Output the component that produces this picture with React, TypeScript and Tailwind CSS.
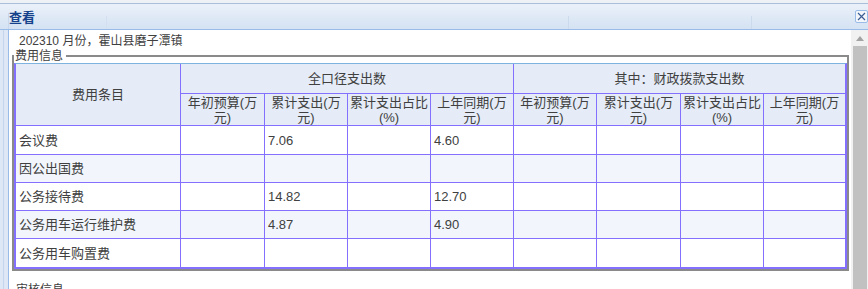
import React from "react";

const P = "border-[#8470ff]";

const subHeads: [string, string][] = [
  ["年初预算(万", "元)"],
  ["累计支出(万", "元)"],
  ["累计支出占比", "(%)"],
  ["上年同期(万", "元)"],
  ["年初预算(万", "元)"],
  ["累计支出(万", "元)"],
  ["累计支出占比", "(%)"],
  ["上年同期(万", "元)"],
];

const rows: string[][] = [
  ["会议费", "", "7.06", "", "4.60", "", "", "", ""],
  ["因公出国费", "", "", "", "", "", "", "", ""],
  ["公务接待费", "", "14.82", "", "12.70", "", "", "", ""],
  ["公务用车运行维护费", "", "4.87", "", "4.90", "", "", "", ""],
  ["公务用车购置费", "", "", "", "", "", "", "", ""],
];

export default function App() {
  return (
    <div className="relative w-[868px] h-[289px] overflow-hidden bg-white text-[#404040] font-[family-name:'Liberation_Sans','Noto_Sans_CJK_SC',sans-serif]">
      {/* top strip */}
      <div className="h-[3px] bg-[#eef2f7]" />
      {/* header */}
      <div className="relative h-[27px] border-t border-b border-t-[#a9bfd8] border-b-[#99bbe8] bg-gradient-to-b from-[#ebf1f9] to-[#d4e2f3] flex items-center pl-[9px]">
        <div className="absolute left-[8px] top-[9px] bottom-0 w-px bg-[#c9d8ec]" />
        <div className="absolute left-[106px] top-[12px] bottom-0 w-px bg-[#d3dff0]" />
        <div className="absolute left-[568px] top-[12px] bottom-0 w-px bg-[#ccdaee]" />
        <div className="absolute left-[751px] top-[12px] bottom-0 w-px bg-[#ccdaee]" />
        <span className="relative text-[13px] leading-[15px] font-bold text-[#15428b] mt-[1px]">查看</span>
        <div className="absolute left-[855px] top-[6px] w-[13px] h-[13px] rounded-[2px] border border-[#99bbe8] bg-[#f3f7fc] flex items-center justify-center">
          <svg width="9" height="9" viewBox="0 0 9 9">
            <path d="M1 1 L8 8 M8 1 L1 8" stroke="#3b5d93" strokeWidth="1.2" fill="none" />
          </svg>
        </div>
      </div>
      {/* body */}
      <div className="flex h-[259px]">
        <div className="w-[9px] bg-[#dde7f5] border-r border-[#99bbe8] flex">
          <div className="ml-[3px] w-px bg-[#c5d5eb]" />
        </div>
        <div className="w-[842px] bg-white">
          <div className="mt-[3px] pl-[10px] text-[12px] leading-[16px] h-[16px]">202310 月份，霍山县磨子潭镇</div>
          <fieldset className="ml-[3px] w-[837px] border-2 border-[#8a8a8a] p-0 m-0">
            <legend className="ml-0 pl-[1px] pr-[3px] text-[12px] leading-[14px]">费用信息</legend>
            <div className={`border-t border-t-[#7eb3e0] border-l-2 border-r-2 border-b-2 border-l-[#8470ff] border-r-[#8470ff] border-b-[#8470ff] grid grid-cols-[165px_84px_83px_83px_83px_83px_84px_83px_81px] grid-rows-[30px_32px_29px_28px_28px_28px_28px] text-[13px]`}>
              <div className={`row-span-2 border-r border-b ${P} bg-[#e5ecf7] flex items-center justify-center leading-[15px]`}>
                费用条目
              </div>
              <div className={`col-span-4 border-r border-b ${P} bg-[#e5ecf7] flex items-center justify-center leading-[15px]`}>
                全口径支出数
              </div>
              <div className={`col-span-4 border-b ${P} bg-[#e5ecf7] flex items-center justify-center leading-[15px]`}>
                其中：财政拨款支出数
              </div>
              {subHeads.map((h, i) => (
                <div
                  key={i}
                  className={`${i < 7 ? "border-r" : ""} border-b ${P} bg-[#e5ecf7] flex flex-col items-center justify-center leading-[15px] text-center`}
                >
                  <span>{h[0]}</span>
                  <span>{h[1]}</span>
                </div>
              ))}
              {rows.map((r, ri) =>
                r.map((c, ci) => (
                  <div
                    key={`${ri}-${ci}`}
                    className={`${ci < 8 ? "border-r" : ""} ${ri < 4 ? "border-b" : ""} ${P} ${
                      ri % 2 === 1 ? "bg-[#f2f6fc]" : "bg-white"
                    } flex items-center pl-[3px] leading-[15px] whitespace-nowrap`}
                  >
                    {c}
                  </div>
                ))
              )}
            </div>
          </fieldset>
          <div className="mt-[11px] pl-[7px] text-[12px] leading-[16px]">审核信息</div>
        </div>
        {/* scrollbar */}
        <div className="w-[17px] bg-[#f1f1f1] flex flex-col">
          <div className="h-[16px] flex items-center justify-center">
            <svg width="8" height="5" viewBox="0 0 8 5">
              <path d="M0 5 L4 0 L8 5 Z" fill="#a3a3a3" />
            </svg>
          </div>
          <div className="ml-[2px] w-[14px] flex-1 bg-[#c1c1c1]" />
        </div>
      </div>
    </div>
  );
}
